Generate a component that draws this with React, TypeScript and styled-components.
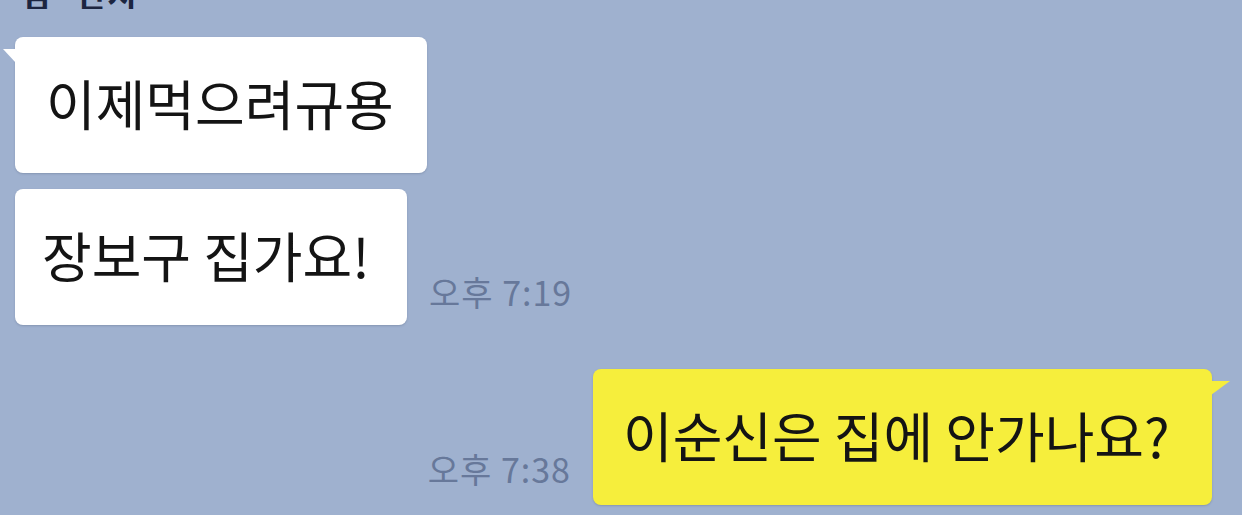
import React from "react";
import styled, {createGlobalStyle} from "styled-components";

const GlobalStyle = createGlobalStyle`
	html, body {
		margin: 0;
		padding: 0;
		background: #9fb1cf;
	}
	body {
		font-family: "Noto Sans CJK KR", "Noto Sans", sans-serif;
	}
`;

const ChatRoom = styled.div`
	width: 1242px;
	height: 515px;
	overflow: hidden;
	background: #9fb1cf;
	display: flex;
	flex-direction: column;
	box-sizing: border-box;
	padding: 0 30px 0 15px;
`;

const SenderName = styled.div`
	height: 9px;
	overflow: hidden;
	padding-left: 6px;
	display: flex;
	align-items: flex-end;
	font-size: 32px;
	font-weight: 700;
	line-height: 1;
	color: #1c2540;
	letter-spacing: 2px;
	word-spacing: 14px;
	white-space: nowrap;
`;

const MessageRow = styled.div<{ $mine?: boolean; $gap: number }>`
	display: flex;
	align-items: flex-end;
	justify-content: ${p => p.$mine ? "flex-end" : "flex-start"};
	gap: 22px;
	margin-top: ${p => p.$gap}px;
`;

const Bubble = styled.div<{ $mine?: boolean; $tail?: boolean; $width: number; $pad: number }>`
	position: relative;
	box-sizing: border-box;
	width: ${p => p.$width}px;
	height: 136px;
	border-radius: 8px;
	background: ${p => p.$mine ? "#f6ee3c" : "#ffffff"};
	color: #141414;
	font-size: 54px;
	line-height: 1;
	display: flex;
	align-items: center;
	padding-left: ${p => p.$pad}px;
	padding-bottom: 4px;
	white-space: nowrap;
	box-shadow: 0 1px 2px rgba(60, 70, 100, 0.25);

	&::before {
		content: "";
		display: ${p => p.$tail ? "block" : "none"};
		position: absolute;
		top: 12px;
		${p => p.$mine ? "right: -18px;" : "left: -12px;"}
		width: 0;
		height: 0;
		border-top: 14px solid ${p => p.$mine ? "#f6ee3c" : "#ffffff"};
		${p => p.$mine ? "border-right: 19px solid transparent;" : "border-left: 13px solid transparent;"}
	}
`;

const TimeStamp = styled.span<{ $lift: number }>`
	font-size: 34px;
	line-height: 1;
	color: #67789a;
	letter-spacing: 1px;
	white-space: nowrap;
	margin-bottom: ${p => p.$lift}px;
`;

const messages = [
	{ text: "이제먹으려규용", mine: false, tail: true, width: 412, gap: 28, pad: 31, time: "", lift: 0 },
	{ text: "장보구 집가요!", mine: false, tail: false, width: 392, gap: 16, pad: 27, time: "오후 7:19", lift: 16 },
	{ text: "이순신은 집에 안가나요?", mine: true, tail: true, width: 619, gap: 44, pad: 30, time: "오후 7:38", lift: 19 },
];

const App = () => {
	return <>
		<GlobalStyle/>
		<ChatRoom>
			<SenderName>김 민지</SenderName>
			{messages.map((m, i) =>
				<MessageRow key={i} $mine={m.mine} $gap={m.gap}>
					{m.mine && <TimeStamp $lift={m.lift}>{m.time}</TimeStamp>}
					<Bubble $mine={m.mine} $tail={m.tail} $width={m.width} $pad={m.pad}>
						{m.text}
					</Bubble>
					{!m.mine && m.time && <TimeStamp $lift={m.lift}>{m.time}</TimeStamp>}
				</MessageRow>
			)}
		</ChatRoom>
	</>;
}

export default App;
